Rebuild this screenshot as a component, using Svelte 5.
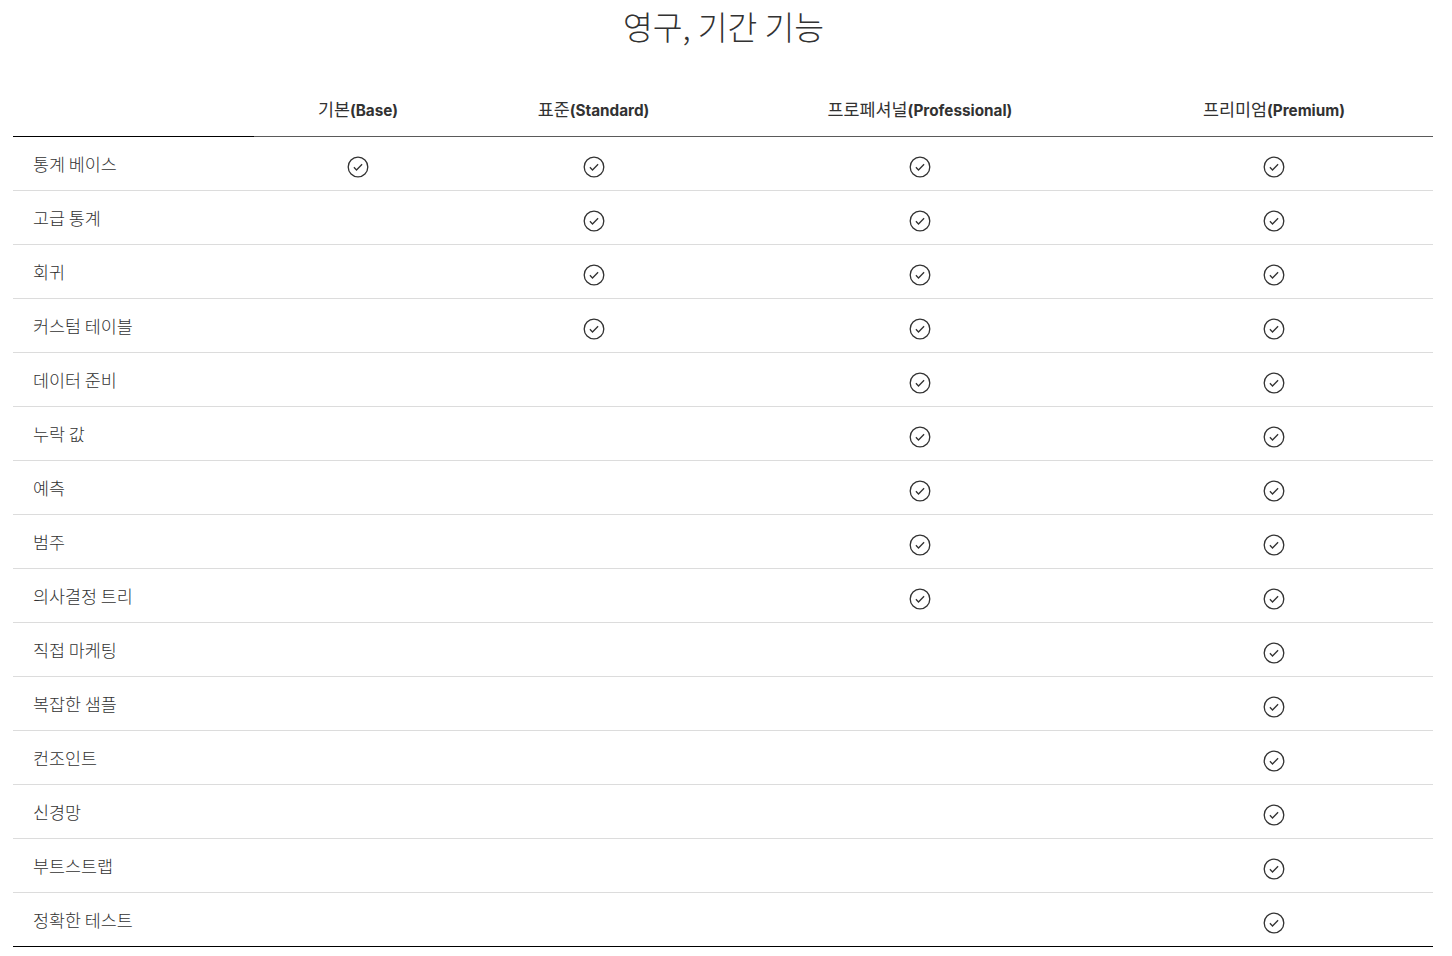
<script lang="ts">
  const plans = [
    { ko: '기본', en: '(Base)' },
    { ko: '표준', en: '(Standard)' },
    { ko: '프로페셔널', en: '(Professional)' },
    { ko: '프리미엄', en: '(Premium)' }
  ]

  // tier = first plan index that includes the feature
  const features = [
    { name: '통계 베이스', tier: 0 },
    { name: '고급 통계', tier: 1 },
    { name: '회귀', tier: 1 },
    { name: '커스텀 테이블', tier: 1 },
    { name: '데이터 준비', tier: 2 },
    { name: '누락 값', tier: 2 },
    { name: '예측', tier: 2 },
    { name: '범주', tier: 2 },
    { name: '의사결정 트리', tier: 2 },
    { name: '직접 마케팅', tier: 3 },
    { name: '복잡한 샘플', tier: 3 },
    { name: '컨조인트', tier: 3 },
    { name: '신경망', tier: 3 },
    { name: '부트스트랩', tier: 3 },
    { name: '정확한 테스트', tier: 3 }
  ]
</script>

<div class="page">
  <h1>영구, 기간 기능</h1>
  <table>
    <colgroup>
      <col class="c0" />
      <col class="c1" />
      <col class="c2" />
      <col class="c3" />
      <col class="c4" />
    </colgroup>
    <thead>
      <tr>
        <th class="corner"></th>
        {#each plans as plan}
          <th><span class="ko">{plan.ko}</span>{plan.en}</th>
        {/each}
      </tr>
    </thead>
    <tbody>
      {#each features as feature}
        <tr>
          <td class="name">{feature.name}</td>
          {#each plans as _, i}
            <td class="mark">
              {#if i >= feature.tier}
                <svg width="22" height="22" viewBox="0 0 22 22" aria-hidden="true">
                  <circle cx="11" cy="11" r="9.8" fill="none" stroke="#323232" stroke-width="1.3" />
                  <path d="M6.9 11.3l2.6 2.7 5.6-5.8" fill="none" stroke="#323232" stroke-width="1.3" />
                </svg>
              {/if}
            </td>
          {/each}
        </tr>
      {/each}
    </tbody>
  </table>
</div>

<style>
  :global(body) {
    background: #fff;
    color: #323232;
    font-family: Inter, "Noto Sans CJK KR", sans-serif;
  }

  .page {
    padding: 0 19px 0 13px;
  }

  h1 {
    margin: 0;
    height: 54px;
    padding-left: 1px;
    line-height: 52px;
    text-align: center;
    font-size: 32.4px;
    font-weight: 300;
    font-family: "Noto Sans CJK KR", sans-serif;
  }

  table {
    width: 1420px;
    table-layout: fixed;
    border-collapse: collapse;
  }

  .c0 { width: 241px; }
  .c1 { width: 208px; }
  .c2 { width: 263px; }
  .c3 { width: 390px; }
  .c4 { width: 318px; }

  thead tr {
    height: 82px;
  }

  th {
    padding: 0 0 14px;
    vertical-align: bottom;
    font-size: 15.3px;
    line-height: 22px;
    font-weight: 700;
    text-align: center;
    border-bottom: 1px solid #5a5a5a;
  }

  th.corner {
    border-bottom-color: #000;
  }

  .ko {
    font-size: 17.4px;
    font-weight: 400;
    font-family: "Noto Sans CJK KR", sans-serif;
  }

  tbody tr {
    height: 54px;
  }

  td {
    padding: 0;
    border-bottom: 1px solid #dcdcdc;
  }

  tbody tr:last-child td {
    border-bottom-color: #000;
  }

  .name {
    padding: 1px 0 0 20px;
    font-size: 17.4px;
    line-height: 24px;
    font-weight: 300;
    font-family: "Noto Sans CJK KR", sans-serif;
  }

  .mark {
    padding-top: 7px;
    text-align: center;
    vertical-align: middle;
  }

  .mark svg {
    display: block;
    margin: 0 auto;
  }
</style>
